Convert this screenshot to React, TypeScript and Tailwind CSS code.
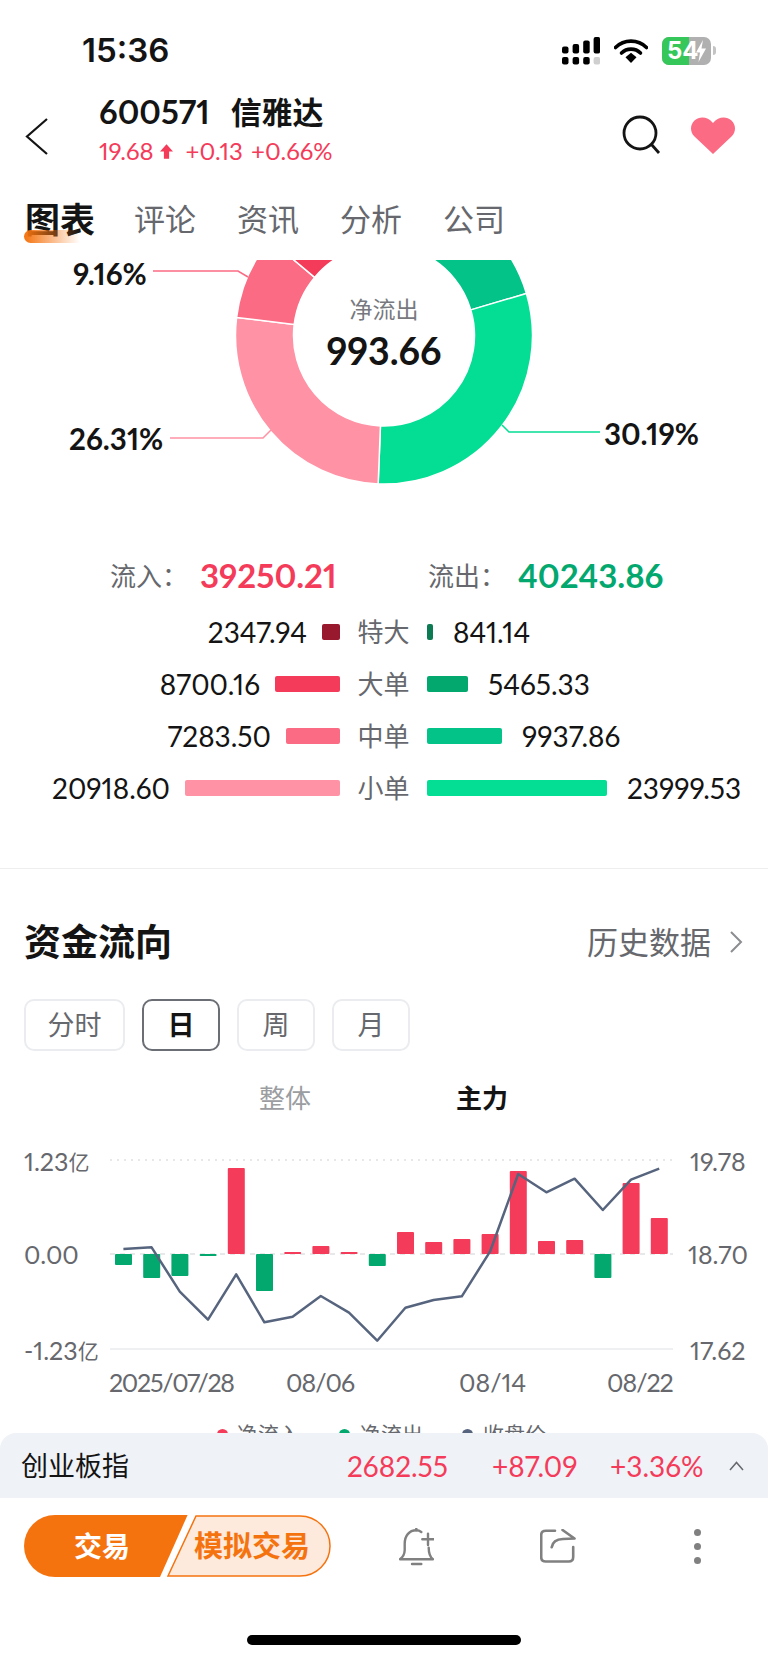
const RED = "#f43b5a";

const segments = [
  { value: 841.14, color: "#0c7a52" },
  { value: 5465.33, color: "#03a86f" },
  { value: 9937.86, color: "#03c388" },
  { value: 23999.53, color: "#04dd94" },
  { value: 20918.6, color: "#ff92a5" },
  { value: 7283.5, color: "#fb6b84" },
  { value: 8700.16, color: "#f43b5a" },
  { value: 2347.94, color: "#98182e" },
];

const rows = [
  { label: "特大", left: "2347.94", right: "841.14", lw: 18, rw: 6, lc: "bg-[#98182e]", rc: "bg-[#0c7a52]" },
  { label: "大单", left: "8700.16", right: "5465.33", lw: 65, rw: 41, lc: "bg-[#f43b5a]", rc: "bg-[#03a86f]" },
  { label: "中单", left: "7283.50", right: "9937.86", lw: 54, rw: 75, lc: "bg-[#fb6b84]", rc: "bg-[#03c388]" },
  { label: "小单", left: "20918.60", right: "23999.53", lw: 155, rw: 180, lc: "bg-[#ff92a5]", rc: "bg-[#04dd94]" },
];

// net flow per day, px above (+) or below (-) the zero line
const bars = [-11, -24, -22, -2, 86, -37, 2, 8, 2, -12, 22, 12, 15, 20, 83, 13, 14, -24, 71, 36];
// close price line, y inside the chart svg
const closes = [109, 107.3, 151.7, 179.7, 134.3, 182.3, 176.7, 156, 172.7, 200.7, 167.7, 160, 156.3, 111.7, 34, 52.3, 38.7, 70, 39.7, 28.7];

function polar(cx: number, cy: number, r: number, deg: number) {
  const a = (deg * Math.PI) / 180;
  return [cx + r * Math.sin(a), cy - r * Math.cos(a)];
}

function arc(start: number, end: number) {
  const cx = 384;
  const cy = 75.5;
  const [x1, y1] = polar(cx, cy, 148.5, start);
  const [x2, y2] = polar(cx, cy, 148.5, end);
  const [x3, y3] = polar(cx, cy, 90.5, end);
  const [x4, y4] = polar(cx, cy, 90.5, start);
  const large = end - start > 180 ? 1 : 0;
  return `M${x1} ${y1}A148.5 148.5 0 ${large} 1 ${x2} ${y2}L${x3} ${y3}A90.5 90.5 0 ${large} 0 ${x4} ${y4}Z`;
}

function Donut() {
  const total = segments.reduce((sum, s) => sum + s.value, 0);
  let angle = 0;
  return (
    <svg width="768" height="240" viewBox="0 0 768 240" className="block">
      {segments.map((s) => {
        const start = angle;
        angle += (s.value / total) * 360;
        return <path key={s.color} d={arc(start, angle)} fill={s.color} stroke="#fff" strokeWidth="1.5" />;
      })}
      <polyline points="153,11 238,11 248,17" fill="none" stroke="#fb6b84" strokeWidth="1.5" />
      <polyline points="170,178 263,178 271,170" fill="none" stroke="#ff92a5" strokeWidth="1.5" />
      <polyline points="600,172 509,172 502,165" fill="none" stroke="#04dd94" strokeWidth="1.5" />
      <g fill="#141414" fontSize="29.5" fontWeight="700" dominantBaseline="central">
        <text x="73" y="13">9.16%</text>
        <text x="69" y="178">26.31%</text>
        <text x="604" y="173">30.19%</text>
      </g>
      <text x="384" y="49" textAnchor="middle" dominantBaseline="central" fontSize="23" fill="#77797e">净流出</text>
      <text x="384" y="90" textAnchor="middle" dominantBaseline="central" fontSize="37.5" fontWeight="700" fill="#141414">993.66</text>
    </svg>
  );
}

function FlowChart() {
  const zero = 114;
  const line = closes.map((y, i) => `${123.4 + i * 28.2},${y}`).join(" ");
  return (
    <svg width="768" height="260" viewBox="0 0 768 260" className="block">
      <line x1="110" x2="673" y1="20" y2="20" stroke="#dfe1e4" strokeWidth="1.5" strokeDasharray="2 5" />
      <line x1="110" x2="673" y1={zero} y2={zero} stroke="#dfe1e4" strokeWidth="1.5" strokeDasharray="5 5" />
      <line x1="110" x2="673" y1="209" y2="209" stroke="#e9ebee" strokeWidth="1.5" />
      {bars.map((b, i) => (
        <rect
          key={i}
          x={115 + i * 28.2}
          y={b > 0 ? zero - b : zero}
          width="17"
          height={Math.abs(b)}
          rx="1"
          fill={b > 0 ? RED : "#03a86f"}
        />
      ))}
      <polyline points={line} fill="none" stroke="#56647e" strokeWidth="2.5" strokeLinejoin="round" />
      <g fontSize="25" fill="#66686d" dominantBaseline="central">
        <text x="24" y="21">1.23<tspan fontSize="21">亿</tspan></text>
        <text x="24" y="114">0.00</text>
        <text x="24" y="210">-1.23<tspan fontSize="21">亿</tspan></text>
        <text x="690" y="21">19.78</text>
        <text x="688" y="114">18.70</text>
        <text x="690" y="210">17.62</text>
        <text x="109" y="242" letterSpacing="-1.3">2025/07/28</text>
        <text x="286" y="242" letterSpacing="-1">08/06</text>
        <text x="459" y="242">08/14</text>
        <text x="607" y="242" letterSpacing="-1">08/22</text>
      </g>
    </svg>
  );
}

function StatusIcons() {
  return (
    <div className="flex items-center">
      <svg width="38" height="28" viewBox="0 0 38 28">
        <rect x="0" y="20" width="6.5" height="7.5" rx="2" fill="#000" />
        <rect x="10.6" y="20" width="6.5" height="7.5" rx="2" fill="#000" />
        <rect x="21.2" y="20" width="6.5" height="7.5" rx="2" fill="#000" />
        <rect x="31.6" y="20" width="6.5" height="7.5" rx="2" fill="#cfcfcf" />
        <rect x="0" y="9.5" width="6.5" height="7" rx="2" fill="#000" />
        <rect x="10.6" y="7" width="6.5" height="9.5" rx="2" fill="#000" />
        <rect x="21.2" y="3.5" width="6.5" height="13" rx="2" fill="#000" />
        <rect x="31.6" y="0" width="6.5" height="16.5" rx="2" fill="#000" />
      </svg>
      <svg width="34" height="25" viewBox="0 0 34 25" className="ml-[14px]">
        <path d="M1.5 9.5a22 22 0 0 1 31 0" fill="none" stroke="#000" strokeWidth="3.6" strokeLinecap="round" />
        <path d="M7.5 15a13.5 13.5 0 0 1 19 0" fill="none" stroke="#000" strokeWidth="3.6" strokeLinecap="round" />
        <path d="M11.5 19.3 17 14.8l5.5 4.5L17 25z" fill="#000" />
      </svg>
      <div className="relative ml-[14px] flex h-[28px] w-[49px] overflow-hidden rounded-[7px] bg-[#b0b0b0]">
        <div className="h-full w-[27px] bg-[#35c759]" />
        <span className="absolute left-[5px] top-0 text-[24px] leading-[28px] font-bold text-white font-['Inter',sans-serif]">54</span>
        <svg width="12" height="22" viewBox="0 0 12 22" className="absolute left-[33px] top-[3px]">
          <path d="M8 0 1 12.5h4L3.5 22 11 8.5H6.5z" fill="#fff" />
        </svg>
      </div>
      <div className="ml-[2px] h-[9px] w-[3px] rounded-r-full bg-[#c4c4c4]" />
    </div>
  );
}

function BellIcon() {
  return (
    <svg width="35" height="38" viewBox="0 0 35 38" fill="none" stroke="#808080" strokeWidth="2.4" strokeLinecap="round" strokeLinejoin="round">
      <path d="M22.3 4Q20 2.3 17.3 2.3C10 2.3 5.7 8 5.7 15.7v6.6Q5.5 28 .9 31.3H34Q29.7 28 29.7 19.7" />
      <path d="M17.3.6v1.7M29 5.6v11.4M23.3 11.3h11.4M13 36h9.3" />
    </svg>
  );
}

function ShareIcon() {
  return (
    <svg width="36" height="35" viewBox="0 0 36 35" fill="none" stroke="#808080" strokeWidth="2.6" strokeLinecap="round" strokeLinejoin="round">
      <path d="M15 1.7H6Q1.2 1.7 1.2 6v22q0 4.5 4.5 4.5h23q4.5 0 4.5-4.5V18" />
      <path d="M22.5 1 34.5 9.5 23 10C17 10.200 12.500 13 11.700 18.300" />
    </svg>
  );
}

export default function App() {
  return (
    <div className="relative flex h-[1663px] w-[768px] flex-col overflow-hidden bg-white font-['Lato','Noto_Sans_CJK_SC',sans-serif] text-[#141414] proportional-nums">
      {/* status bar */}
      <div className="flex h-[88px] shrink-0 items-center justify-between pr-[52px] pl-[82px] pt-[13px]">
        <span className="font-['Inter',sans-serif] text-[33px] font-semibold">15:36</span>
        <StatusIcons />
      </div>

      {/* header */}
      <div className="flex h-[102px] shrink-0 items-start pl-[25px] pr-[33px]">
        <svg width="24" height="37" viewBox="0 0 24 37" className="mt-[30px]" fill="none" stroke="#141414" strokeWidth="2.2">
          <path d="M22 1 2 18.500 22 36" />
        </svg>
        <div className="ml-[50px] flex-1">
          <div className="flex items-center pt-[6px] text-[32.5px] leading-[36px] font-bold">
            <span>600571</span>
            <span className="ml-[21px] text-[31px] font-semibold">信雅达</span>
          </div>
          <div className="mt-[8px] flex items-center text-[24px] leading-[26px] text-[#f43b5a]">
            <span>19.68</span>
            <svg width="13" height="15" viewBox="0 0 15 17" className="ml-[6px]">
              <path d="M7.500 0 15 8.500H10.500V17H4.500V8.500H0z" fill="#f43b5a" />
            </svg>
            <span className="ml-[13px]">+0.13</span>
            <span className="ml-[8px]">+0.66%</span>
          </div>
        </div>
        <svg width="40" height="40" viewBox="0 0 40 40" className="mt-[27px]" fill="none" stroke="#141414" strokeWidth="2.8">
          <circle cx="18" cy="18" r="16" />
          <path d="M29.500 29.500 37 38" />
        </svg>
        <svg width="44" height="37" viewBox="0 0 44 37" className="ml-[29px] mt-[29px]">
          <path d="M22 37 3.500 19.500C-1.500 14.500-.8 7.500 3.500 3.500 8.500-1 16.500-.8 22 6c5.500-6.800 13.500-7 18.500-2.500 4.300 4 5 11 0 16z" fill="#fb6b84" />
        </svg>
      </div>

      {/* tabs */}
      <div className="relative flex h-[70px] shrink-0 items-start pl-[25px] pt-[7px] text-[31px] leading-[44px] text-[#66686d]">
        <span className="text-[35px] font-bold text-[#141414]">图表</span>
        <span className="ml-[39px]">评论</span>
        <span className="ml-[41px]">资讯</span>
        <span className="ml-[41px]">分析</span>
        <span className="ml-[41px]">公司</span>
        <div className="absolute left-[24px] top-[40px] h-[13px] w-[56px] rounded-l-full rounded-r-[3px] bg-gradient-to-r from-[#f5730f] to-transparent" />
      </div>

      {/* scrolling content */}
      <div className="min-h-0 flex-1 overflow-hidden">
        <Donut />

        <div className="mt-[56px] flex h-[40px] items-center text-[26px]">
          <span className="ml-[110px] w-[90px] text-[#66686d]">流入：</span>
          <span className="w-[228px] text-[33px] font-bold text-[#f43b5a]">39250.21</span>
          <span className="w-[90px] text-[#66686d]">流出：</span>
          <span className="text-[33px] font-bold text-[#03a86f]">40243.86</span>
        </div>

        <div className="mt-[10px]">
          {rows.map((r) => (
            <div key={r.label} className="flex h-[52px] items-center">
              <div className="flex w-[340px] items-center justify-end">
                <span className="mr-[15px] text-[28px]">{r.left}</span>
                <div className={`h-[16px] rounded-[2px] ${r.lc}`} style={{ width: r.lw }} />
              </div>
              <span className="w-[87px] text-center text-[26px] text-[#66686d]">{r.label}</span>
              <div className="flex items-center">
                <div className={`h-[16px] rounded-[2px] ${r.rc}`} style={{ width: r.rw }} />
                <span className="ml-[20px] text-[28px]">{r.right}</span>
              </div>
            </div>
          ))}
        </div>

        <div className="mt-[54px] h-px bg-[#eeeeee]" />

        <div className="mt-[53px] flex h-[40px] items-center justify-between pl-[24px] pr-[25px]">
          <span className="text-[37px] font-bold">资金流向</span>
          <div className="flex items-center text-[31px] text-[#66686d]">
            <span>历史数据</span>
            <svg width="14" height="24" viewBox="0 0 14 24" className="ml-[18px]" fill="none" stroke="#8b8d91" strokeWidth="2">
              <path d="m2 2 10 10L2 22" />
            </svg>
          </div>
        </div>

        <div className="mt-[37px] flex gap-[17px] pl-[24px] text-[27px] text-[#66686d]">
          <div className="flex h-[52px] w-[101px] items-center justify-center rounded-[10px] border-2 border-[#ebecef]">分时</div>
          <div className="flex h-[52px] w-[78px] items-center justify-center rounded-[10px] border-2 border-[#6b6f75] font-bold text-[#141414]">日</div>
          <div className="flex h-[52px] w-[78px] items-center justify-center rounded-[10px] border-2 border-[#ebecef]">周</div>
          <div className="flex h-[52px] w-[78px] items-center justify-center rounded-[10px] border-2 border-[#ebecef]">月</div>
        </div>

        <div className="mt-[29px] flex h-[36px] items-center text-[26px]">
          <span className="ml-[259px] text-[#9b9da1]">整体</span>
          <span className="ml-[145px] font-bold">主力</span>
        </div>

        <div className="mt-[24px]">
          <FlowChart />
        </div>

        <div className="mt-[19px] flex h-[30px] items-center text-[21px] text-[#66686d]">
          <span className="ml-[217px] h-[11px] w-[11px] rounded-full bg-[#f43b5a]" />
          <span className="ml-[9px]">净流入</span>
          <span className="ml-[39px] h-[11px] w-[11px] rounded-full bg-[#03a86f]" />
          <span className="ml-[10px]">净流出</span>
          <span className="ml-[39px] h-[11px] w-[11px] rounded-full bg-[#56647e]" />
          <span className="ml-[10px]">收盘价</span>
        </div>
      </div>

      {/* index ticker */}
      <div className="flex h-[65px] shrink-0 items-center rounded-t-[16px] bg-[#eff2f6] pl-[21px] pt-[1px] text-[28px]">
        <span className="w-[326px] text-[27px]">创业板指</span>
        <span className="w-[145px] text-[#f43b5a]">2682.55</span>
        <span className="w-[118px] text-[#f43b5a]">+87.09</span>
        <span className="w-[119px] text-[#f43b5a]">+3.36%</span>
        <svg width="15" height="10" viewBox="0 0 15 10" fill="none" stroke="#66686d" strokeWidth="1.5">
          <path d="m1 9 6.500-7.500L14 9" />
        </svg>
      </div>

      {/* action bar */}
      <div className="flex h-[165px] shrink-0 flex-col">
        <div className="mt-[17px] flex items-center pl-[24px]">
          <div className="relative flex h-[62px] w-[310px] items-center">
            <svg width="310" height="62" viewBox="0 0 310 62" className="absolute inset-0">
              <path d="M31 0h132.600L136 62H31a31 31 0 0 1 0-62z" fill="#f5730f" />
              <path d="M172 1h104a30 30 0 0 1 0 60H144z" fill="#fdeadd" stroke="#f5730f" strokeWidth="1.500" />
            </svg>
            <span className="relative ml-[50px] text-[28px] font-bold text-white">交易</span>
            <span className="relative ml-[64px] text-[29px] font-bold text-[#f5730f]">模拟交易</span>
          </div>
          <div className="ml-[65px] mt-[2px]">
            <BellIcon />
          </div>
          <div className="ml-[106px]">
            <ShareIcon />
          </div>
          <div className="ml-[118px] flex flex-col gap-[7px]">
            <div className="h-[7px] w-[7px] rounded-full bg-[#808080]" />
            <div className="h-[7px] w-[7px] rounded-full bg-[#808080]" />
            <div className="h-[7px] w-[7px] rounded-full bg-[#808080]" />
          </div>
        </div>
        <div className="mx-auto mt-[58px] h-[10px] w-[274px] rounded-full bg-black" />
      </div>
    </div>
  );
}
